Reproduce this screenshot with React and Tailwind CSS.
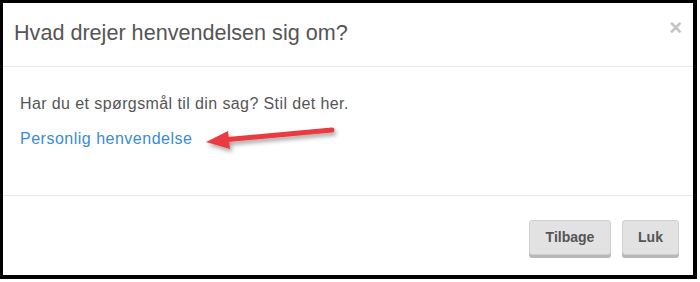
import React from "react";

export default function App() {
  return (
    <div className="w-[700px] h-[282px] bg-white relative" style={{ fontFamily: '"Liberation Sans", Arial, sans-serif' }}>
      <div className="w-[697px] h-[279px] border-l-[3px] border-t-[3px] border-r-[4px] border-b-[4px] border-black bg-white flex flex-col">
        <div className="h-[64px] border-b border-[#e8e8e8] flex items-center justify-between pl-[11px] pr-[11px]">
          <h4 className="text-[21.6px] text-[#555] leading-none -mt-[3px]">Hvad drejer henvendelsen sig om?</h4>
          <span className="text-[22px] font-bold text-[#c4c4c4] leading-none -mt-[14px]">×</span>
        </div>
        <div className="h-[129px] border-b border-[#e8e8e8] pl-[17px] pt-[29px]">
          <p className="text-[16px] tracking-[0.4px] text-[#555] leading-none">Har du et spørgsmål til din sag? Stil det her.</p>
          <p className="text-[16px] tracking-[0.5px] text-[#3a8ad6] leading-none mt-[19px]">Personlig henvendelse</p>
        </div>
        <div className="flex-1 flex justify-end items-start pt-[24px] pr-[14px] gap-[11px]">
          <button className="h-[35px] w-[82px] bg-[#e2e2e2] border border-[#d0d0d0] rounded-[3px] text-[14px] font-bold text-[#555] shadow-[0_3px_0_#b8b8b8]">Tilbage</button>
          <button className="h-[35px] w-[57px] bg-[#e2e2e2] border border-[#d0d0d0] rounded-[3px] text-[14px] font-bold text-[#555] shadow-[0_3px_0_#b8b8b8]">Luk</button>
        </div>
      </div>
      <svg className="absolute left-[200px] top-[121px]" width="145" height="36" viewBox="0 0 145 36">
        <defs>
          <filter id="sh" x="-20%" y="-50%" width="140%" height="200%">
            <feDropShadow dx="2" dy="3" stdDeviation="2" floodColor="#000" floodOpacity="0.35" />
          </filter>
        </defs>
        <g filter="url(#sh)">
          <line x1="132" y1="9" x2="22" y2="19" stroke="#ea3a3f" strokeWidth="5" strokeLinecap="round" />
          <polygon points="6,21 28,10 30,28" fill="#ea3a3f" />
        </g>
      </svg>
    </div>
  );
}
